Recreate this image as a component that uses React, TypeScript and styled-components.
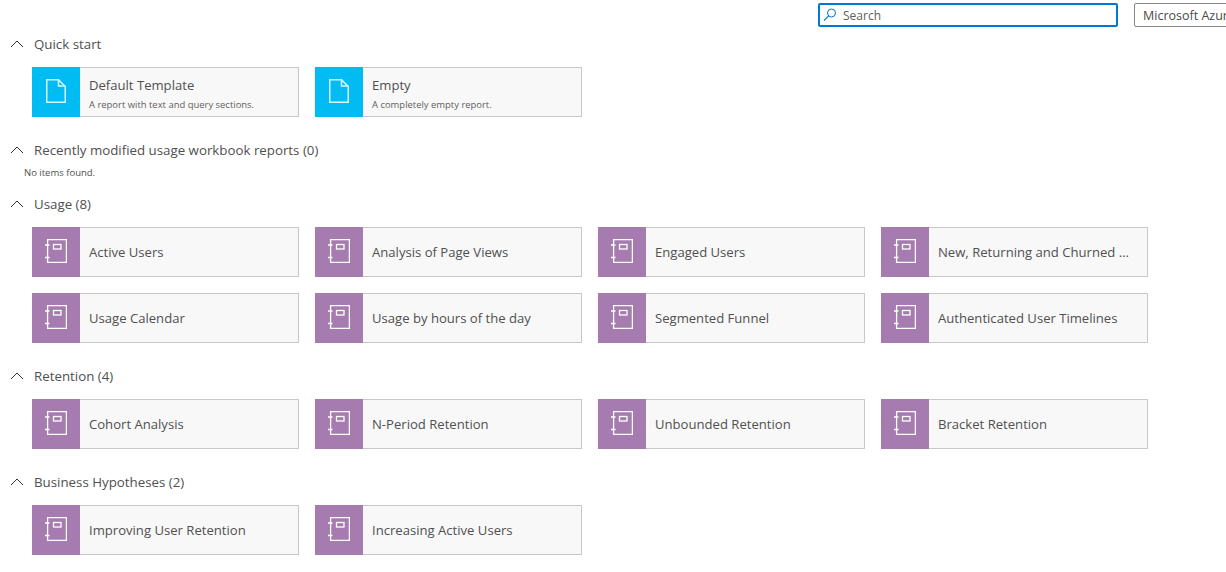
import React from 'react'
import styled, { createGlobalStyle } from 'styled-components'

const GlobalStyle = createGlobalStyle`
    html, body {
        margin: 0;
        padding: 0;
        background: #fff;
        overflow: hidden;
    }
    body {
        font-family: 'Open Sans', 'Noto Sans', sans-serif;
    }
`

interface Report {
    title: string
    description?: string
}

interface Section {
    title: string
    kind: 'template' | 'workbook'
    reports: Report[]
}

const sections: Section[] = [
    {
        title: 'Quick start',
        kind: 'template',
        reports: [
            {
                title: 'Default Template',
                description: 'A report with text and query sections.',
            },
            { title: 'Empty', description: 'A completely empty report.' },
        ],
    },
    {
        title: 'Recently modified usage workbook reports (0)',
        kind: 'workbook',
        reports: [],
    },
    {
        title: 'Usage (8)',
        kind: 'workbook',
        reports: [
            { title: 'Active Users' },
            { title: 'Analysis of Page Views' },
            { title: 'Engaged Users' },
            { title: 'New, Returning and Churned Users' },
            { title: 'Usage Calendar' },
            { title: 'Usage by hours of the day' },
            { title: 'Segmented Funnel' },
            { title: 'Authenticated User Timelines' },
        ],
    },
    {
        title: 'Retention (4)',
        kind: 'workbook',
        reports: [
            { title: 'Cohort Analysis' },
            { title: 'N-Period Retention' },
            { title: 'Unbounded Retention' },
            { title: 'Bracket Retention' },
        ],
    },
    {
        title: 'Business Hypotheses (2)',
        kind: 'workbook',
        reports: [
            { title: 'Improving User Retention' },
            { title: 'Increasing Active Users' },
        ],
    },
]

const SearchIcon = () => (
    <svg width="14" height="14" viewBox="0 0 14 14" fill="none">
        <circle cx="8.5" cy="5" r="4" stroke="#0078d4" strokeWidth="1" />
        <path d="M5.6 7.9 L1 12.5" stroke="#0078d4" strokeWidth="1.1" />
    </svg>
)

const Chevron = () => (
    <svg width="14" height="14" viewBox="0 0 14 14" fill="none">
        <path d="M1 10 L7 4 L13 10" stroke="#333" strokeWidth="1" />
    </svg>
)

const PageIcon = () => (
    <svg width="20" height="24" viewBox="0 0 20 24" fill="none">
        <path
            d="M0.75 0.75 H12.5 L19.25 7.5 V23.25 H0.75 Z"
            stroke="#d9f5fd"
            strokeWidth="1.5"
        />
        <path d="M12.5 0.75 V7 H19.25" stroke="#d9f5fd" strokeWidth="1.5" />
    </svg>
)

const WorkbookIcon = () => (
    <svg width="22" height="24" viewBox="0 0 22 24" fill="none">
        <path d="M2.6 0.6 H21.4 V23.4 H2.6 Z" stroke="#fff" strokeWidth="1.3" />
        <rect x="8.5" y="5.5" width="7.5" height="4.5" stroke="#fff" strokeWidth="1.3" />
        <path d="M0 6 H4.5 M0 18.5 H4.5" stroke="#fff" strokeWidth="1.6" />
    </svg>
)

export default function App() {
    return (
        <Page>
            <GlobalStyle />
            <Header>
                <SearchBox>
                    <SearchIcon />
                    <SearchText>Search</SearchText>
                </SearchBox>
                <Dropdown>Microsoft Azure Application Insights</Dropdown>
            </Header>
            {sections.map((section) => (
                <SectionBlock key={section.title}>
                    <SectionHeading>
                        <Chevron />
                        {section.title}
                    </SectionHeading>
                    {section.reports.length > 0 ? (
                        <CardGrid>
                            {section.reports.map((report) => (
                                <Card key={report.title}>
                                    <IconTile $kind={section.kind}>
                                        {section.kind === 'template' ? (
                                            <PageIcon />
                                        ) : (
                                            <WorkbookIcon />
                                        )}
                                    </IconTile>
                                    <CardBody>
                                        <CardTitle>{report.title}</CardTitle>
                                        {report.description && (
                                            <CardDescription>
                                                {report.description}
                                            </CardDescription>
                                        )}
                                    </CardBody>
                                </Card>
                            ))}
                        </CardGrid>
                    ) : (
                        <EmptyNote>No items found.</EmptyNote>
                    )}
                </SectionBlock>
            ))}
        </Page>
    )
}

const Page = styled.div`
    width: 1226px;
    height: 572px;
    overflow: hidden;
    color: #323130;
`

const Header = styled.div`
    display: flex;
    gap: 16px;
    height: 24px;
    padding: 3px 0 0 818px;
    margin-bottom: 6px;
`

const SearchBox = styled.div`
    box-sizing: border-box;
    flex: 0 0 300px;
    display: flex;
    align-items: center;
    gap: 6px;
    padding: 0 3px;
    border: 2px solid #0078d4;
    border-radius: 2px;
`

const SearchText = styled.span`
    font-size: 12px;
    color: #605e5c;
`

const Dropdown = styled.div`
    box-sizing: border-box;
    flex: 0 0 260px;
    display: flex;
    align-items: center;
    padding: 0 8px;
    border: 1px solid #8a8886;
    border-radius: 2px;
    font-size: 12.5px;
    color: #4a4a4a;
    white-space: nowrap;
`

const SectionBlock = styled.section`
    padding-left: 10px;
    margin-bottom: 22px;

    &:nth-of-type(2) {
        margin-bottom: 13px;
    }
`

const SectionHeading = styled.h2`
    display: flex;
    align-items: center;
    gap: 10px;
    height: 22px;
    margin: 0;
    font-size: 13.3px;
    font-weight: 400;
    color: #505050;
`

const CardGrid = styled.div`
    display: grid;
    grid-template-columns: repeat(4, 267px);
    gap: 16px;
    margin: 12px 0 0 22px;
`

const Card = styled.div`
    box-sizing: border-box;
    display: flex;
    height: 50px;
    background: #f8f8f8;
    border: 1px solid #c8c8c8;
    border-left: 0;
`

const IconTile = styled.div<{ $kind: 'template' | 'workbook' }>`
    flex: 0 0 48px;
    margin: -1px 0;
    padding-bottom: 2px;
    display: flex;
    align-items: center;
    justify-content: center;
    background: ${(props) =>
        props.$kind === 'template' ? '#00bcf2' : '#a67baf'};
`

const CardBody = styled.div`
    flex: 1;
    min-width: 0;
    display: flex;
    flex-direction: column;
    justify-content: center;
    padding: 0 14px 0 9px;
`

const CardTitle = styled.div`
    font-size: 13.1px;
    line-height: 18px;
    color: #505050;
    white-space: nowrap;
    overflow: hidden;
    text-overflow: ellipsis;
`

const CardDescription = styled.div`
    font-size: 9.45px;
    line-height: 14px;
    margin: 4px 0 -4px;
    color: #5f5f5f;
    white-space: nowrap;
`

const EmptyNote = styled.div`
    margin: 5px 0 0 14px;
    font-size: 9.5px;
    line-height: 14px;
    color: #505050;
`
